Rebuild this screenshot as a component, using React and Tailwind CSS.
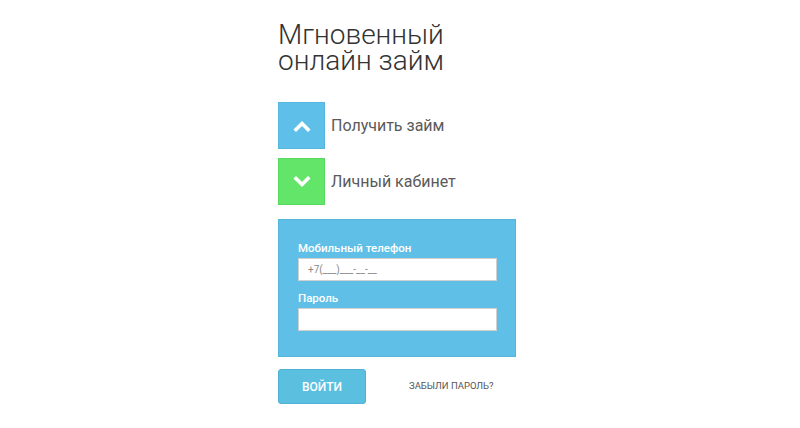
import React from 'react';

function Chevron({ up }) {
  return (
    <svg width="18" height="12" viewBox="0 0 18 12" fill="none">
      <polyline
        points={up ? '3,9.5 9,3.5 15,9.5' : '3,2.5 9,8.5 15,2.5'}
        stroke="#fff"
        strokeWidth="3.6"
        strokeLinecap="square"
        strokeLinejoin="miter"
      />
    </svg>
  );
}

function NavItem({ up, label, color }) {
  return (
    <div className="flex items-center">
      <div className={`flex h-[47px] w-[47px] items-center justify-center border ${color}`}>
        <Chevron up={up} />
      </div>
      <span className="ml-[6px] text-[16px] text-[#5a5a5a]">{label}</span>
    </div>
  );
}

export default function App() {
  return (
    <div className="min-h-[428px] bg-white font-['Roboto',sans-serif]">
      <div className="mx-auto w-[244px] pt-[22px]">
        <div className="w-[238px]">
          <h1 className="text-[28px] font-light leading-[26px] text-[#333]">
            Мгновенный
            <br />
            онлайн займ
          </h1>

          <div className="mt-[28px] flex flex-col gap-[9px]">
            <NavItem up label="Получить займ" color="border-[#55b6e0] bg-[#5ec0e8]" />
            <NavItem label="Личный кабинет" color="border-[#58d85f] bg-[#63e56a]" />
          </div>

          <form className="mt-[14px] border border-[#55b5df] bg-[#60bfe6] px-[19px] pb-[25px] pt-[20px]">
            <label className="block text-[11.5px] font-medium leading-[16px] text-white">Мобильный телефон</label>
            <input
              className="mt-[2px] block h-[23px] w-[199px] border border-[#d0d0d0] bg-white px-[9px] text-[10px] text-[#888] outline-none"
              defaultValue="+7(___)___-__-__"
            />
            <label className="mt-[9px] block text-[11.5px] font-medium leading-[16px] text-white">Пароль</label>
            <input
              type="password"
              className="mt-[2px] block h-[23px] w-[199px] border border-[#d0d0d0] bg-white px-[9px] outline-none"
            />
          </form>

          <div className="mt-[12px] flex items-center">
            <button className="h-[35px] w-[88px] rounded-[3px] border border-[#4fb0d8] bg-[#5bbfe0] text-[12px] font-medium text-white">
              ВОЙТИ
            </button>
            <span className="ml-[43px] text-[9.5px] text-[#555]">ЗАБЫЛИ ПАРОЛЬ?</span>
          </div>
        </div>
      </div>
    </div>
  );
}
